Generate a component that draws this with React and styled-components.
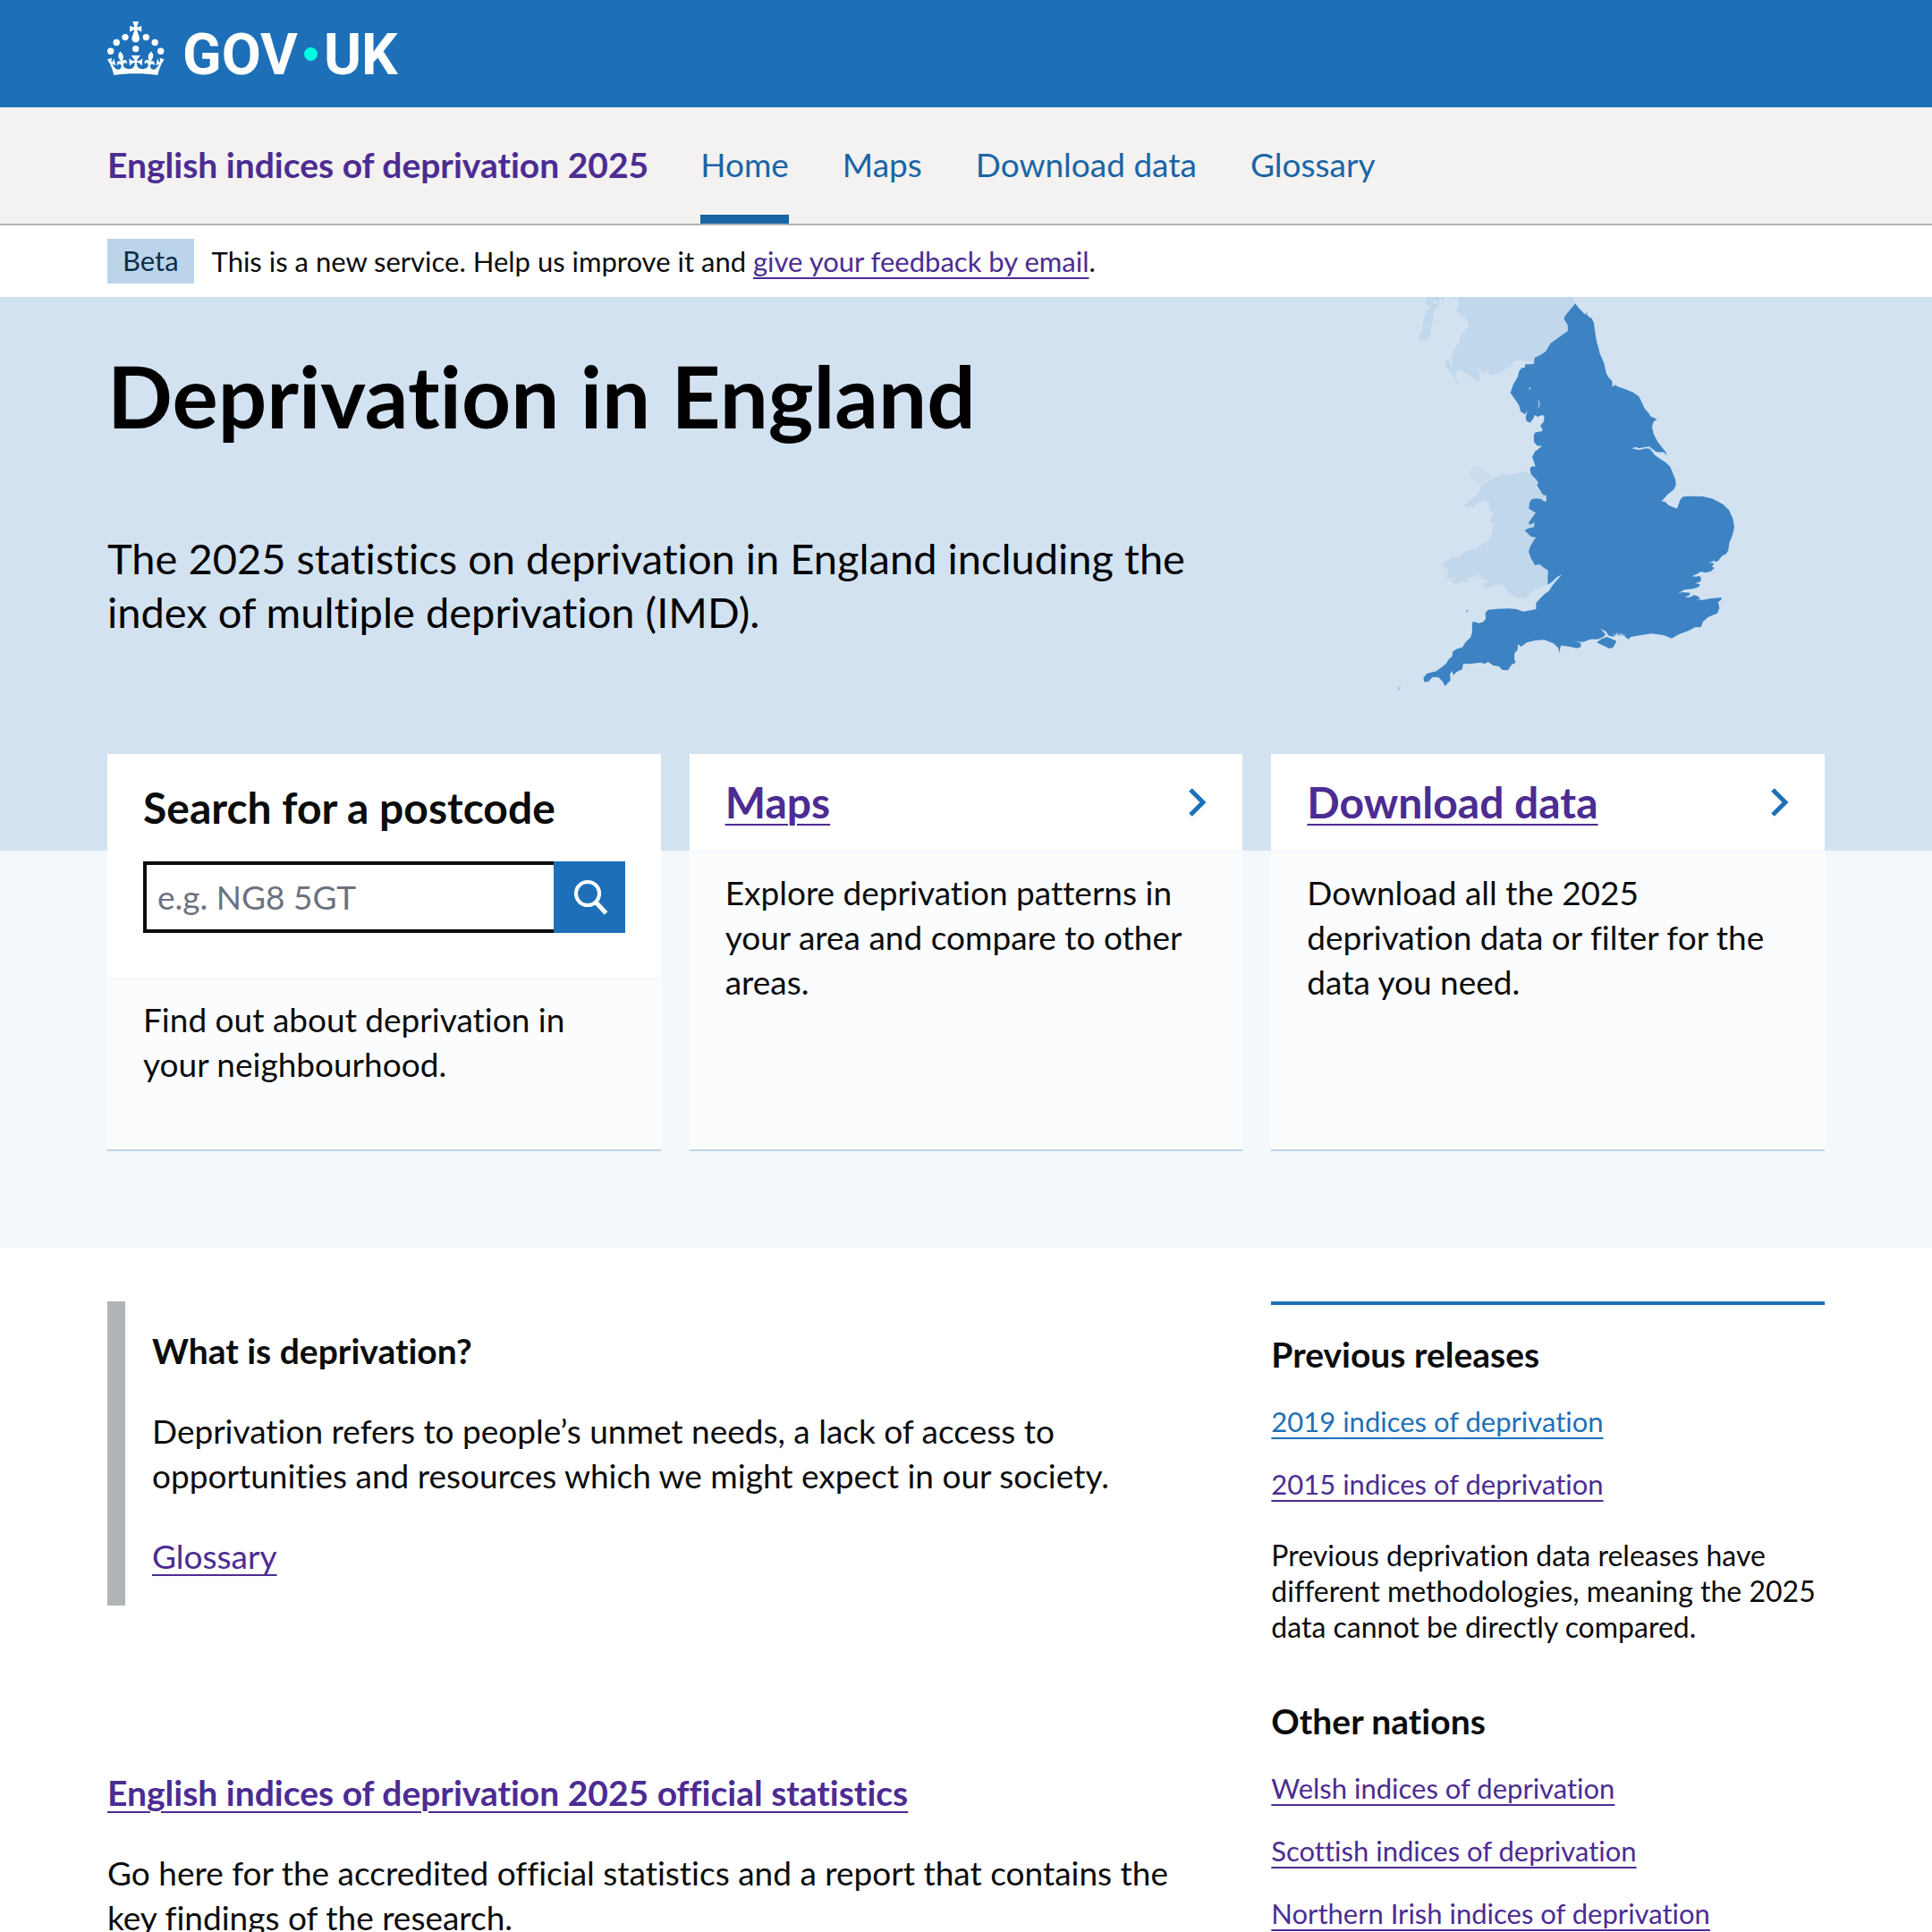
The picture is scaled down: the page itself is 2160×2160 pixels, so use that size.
import React from "react";
import styled, { createGlobalStyle } from "styled-components";

const color = {
  brand: "#1d70b8",
  brandDark: "#1a65a6",
  visited: "#4c2c92",
  text: "#0b0c0c",
  grey: "#f3f2f1",
  border: "#b1b4b6",
  tint: "#bbd4ea",
  hero: "#d2e2f1",
  pale: "#f4f8fb",
};

const GlobalStyle = createGlobalStyle`
  *, *::before, *::after { box-sizing: border-box; }
  body {
    margin: 0;
    background: #ffffff;
    color: ${color.text};
    font-family: Lato, "Liberation Sans", sans-serif;
    font-size: 37px;
    font-variant-ligatures: none;
    line-height: 50px;
  }
  h1, h2, h3, p, ul { margin: 0; padding: 0; }
  ul { list-style: none; }
`;

const Container = styled.div`
  box-sizing: content-box;
  max-width: 1920px;
  margin: 0 auto;
  padding: 0 120px;
`;

const Link = styled.a`
  color: ${(p) => (p.$fresh ? color.brand : color.visited)};
  text-decoration: underline;
  text-decoration-thickness: 2px;
  text-underline-offset: 6px;
`;

/* Header */

const Header = styled.header`
  background: ${color.brand};
`;

const LogoLink = styled.a`
  display: inline-flex;
  align-items: center;
  height: 120px;
  padding-top: 4px;
  color: #ffffff;
  font-family: Roboto, sans-serif;
  font-size: 64px;
  font-weight: 700;
  line-height: 60px;
  text-decoration: none;
`;

const Crown = styled.svg`
  width: 64px;
  height: 60px;
  margin: 0 20px 16px 0;
  fill: currentColor;
`;

const LogoDot = styled.span`
  width: 15px;
  height: 15px;
  margin: 0 7px 4px;
  border-radius: 50%;
  background: #00ffe0;
`;

/* Service navigation */

const ServiceBar = styled.div`
  background: ${color.grey};
  border-bottom: 2px solid ${color.border};
`;

const ServiceRow = styled(Container)`
  display: flex;
  gap: 58px;
`;

const ServiceName = styled.a`
  padding: 39px 0 41px;
  color: ${color.visited};
  font-size: 39px;
  font-weight: 700;
  text-decoration: none;
`;

const NavList = styled.ul`
  display: flex;
  gap: 60px;
`;

const NavLink = styled.a`
  display: block;
  padding: 39px 0 31px;
  border-bottom: 10px solid ${(p) => (p.$active ? color.brandDark : "transparent")};
  color: ${color.brandDark};
  text-decoration: none;
`;

/* Phase banner */

const PhaseBanner = styled(Container)`
  display: flex;
  align-items: center;
  gap: 20px;
  height: 80px;
  font-size: 31px;
  line-height: 40px;
`;

const Tag = styled.strong`
  padding: 4px 17px 6px;
  background: ${color.tint};
  color: #0c2d4a;
  font-weight: 400;
`;

/* Hero */

const Hero = styled.section`
  background: ${color.hero};
  color: #000000;
`;

const HeroRow = styled(Container)`
  display: flex;
  justify-content: space-between;
  padding-bottom: 154px;
`;

const HeroText = styled.div`
  flex: 0 1 1268px;
  padding-top: 60px;
`;

const HeroTitle = styled.h1`
  font-size: 96px;
  line-height: 100px;
`;

const HeroLead = styled.p`
  margin-top: 102px;
  font-size: 47px;
  line-height: 60px;
`;

const MapSvg = styled.svg`
  flex: none;
  width: 440px;
  height: 465px;
  margin-right: 60px;
`;

/* Cards */

const CardSection = styled.section`
  background: ${color.pale};
  padding-bottom: 108px;
`;

const CardGrid = styled(Container)`
  display: grid;
  grid-template-columns: repeat(3, minmax(0, 1fr));
  gap: 32px;
`;

const Card = styled.article`
  display: flex;
  flex-direction: column;
  margin-top: -108px;
  background: #fbfcfe;
  border-bottom: 2px solid ${color.tint};
`;

const CardHead = styled.div`
  display: flex;
  align-items: center;
  justify-content: space-between;
  padding: 24px 40px;
  background: #ffffff;
  border-bottom: 2px solid ${color.pale};
`;

const SearchHead = styled.form`
  display: grid;
  grid-template-columns: minmax(0, 1fr);
  gap: 30px;
  padding: 30px 40px 50px;
  background: #ffffff;
  border-bottom: 2px solid ${color.pale};
`;

const CardTitle = styled.h2`
  font-size: 48px;
  line-height: 60px;
`;

const CardText = styled.p`
  padding: 20px 40px 70px;
`;

const SearchRow = styled.div`
  display: flex;
  height: 80px;
`;

const SearchInput = styled.input`
  flex: 1;
  min-width: 0;
  padding: 0 12px;
  border: 4px solid ${color.text};
  border-right: 0;
  border-radius: 0;
  background: #ffffff;
  color: ${color.text};
  font: inherit;

  &::placeholder {
    color: #6b7280;
    opacity: 1;
  }
`;

const SearchButton = styled.button`
  flex: none;
  width: 80px;
  padding: 0;
  border: 0;
  background: ${color.brand};
  color: #ffffff;

  svg {
    display: block;
  }
`;

/* Main content */

const Main = styled(Container)`
  display: grid;
  grid-template-columns: repeat(3, minmax(0, 1fr));
  gap: 32px;
  padding-top: 60px;
  padding-bottom: 60px;
`;

const Article = styled.div`
  grid-column: span 2;
`;

const Inset = styled.div`
  display: grid;
  gap: 40px;
  padding: 30px;
  border-left: 20px solid ${color.border};
`;

const SmallHeading = styled.h3`
  font-size: 39px;
  line-height: 50px;
`;

const Statistics = styled.section`
  display: grid;
  gap: 40px;
  max-width: 1220px;
  margin-top: 184px;
`;

const Aside = styled.aside`
  display: grid;
  align-content: start;
  gap: 60px;
  padding-top: 30px;
  border-top: 4px solid ${color.brand};
`;

const LinkList = styled.ul`
  display: grid;
  gap: 30px;
  margin-top: 30px;
  font-size: 31px;
  line-height: 40px;
`;

const Note = styled.p`
  margin-top: 40px;
  font-size: 32px;
  line-height: 40px;
`;

function CrownIcon() {
  return (
    <Crown viewBox="0 0 64 60" aria-hidden="true">
      <circle cx="20" cy="17.6" r="3.7" />
      <circle cx="10.2" cy="23.5" r="3.7" />
      <circle cx="3.7" cy="33.2" r="3.7" />
      <circle cx="31.7" cy="30.6" r="3.7" />
      <circle cx="43.3" cy="17.6" r="3.7" />
      <circle cx="53.2" cy="23.5" r="3.7" />
      <circle cx="59.7" cy="33.2" r="3.7" />
      <path d="M33.1,9.8c.2-.1.3-.3.5-.5l4.6,2.4v-6.8l-4.6,1.5c-.1-.2-.3-.3-.5-.5l1.9-5.9h-6.7l1.9,5.9c-.2.1-.3.3-.5.5l-4.6-1.5v6.8l4.6-2.4c.1.2.3.3.5.5l-2.6,8c-.9,2.8,1.2,5.7,4.1,5.7h0c3,0,5.1-2.9,4.1-5.7l-2.6-8ZM37,37.9s-3.4,3.8-4.1,6.1c2.2,0,4.2-.5,6.4-2.8l-.7,8.5c-2-2.8-4.4-4.1-5.7-3.8.1,3.1.5,6.7,5.8,7.2,3.7.3,6.7-1.5,7-3.8.4-2.6-2-4.3-3.7-1.6-1.4-4.5,2.4-6.1,4.9-3.2-1.9-4.5-1.8-7.7,2.4-10.9,3,4,2.6,7.3-1.2,11.1,2.4-1.3,6.2,0,4,4.6-1.2-2.8-3.7-2.2-4.2.2-.3,1.7.7,3.7,3,4.2,1.9.3,4.7-.9,7-5.9-1.3,0-2.4.7-3.9,1.7l2.4-8c.6,2.3,1.4,3.7,2.2,4.5.6-1.6.5-2.8,0-5.3l5,1.8c-2.6,3.6-5.2,8.7-7.3,17.5-7.4-1.1-15.7-1.7-24.5-1.7h0c-8.8,0-17.1.6-24.5,1.7-2.1-8.9-4.7-13.9-7.3-17.5l5-1.8c-.5,2.5-.6,3.7,0,5.3.8-.8,1.6-2.3,2.2-4.5l2.4,8c-1.5-1-2.6-1.7-3.9-1.7,2.3,5,5.2,6.2,7,5.9,2.3-.4,3.3-2.4,3-4.2-.5-2.4-3-3.1-4.2-.2-2.2-4.6,1.6-6,4-4.6-3.7-3.7-4.2-7.1-1.2-11.1,4.2,3.2,4.3,6.4,2.4,10.9,2.5-2.8,6.3-1.3,4.9,3.2-1.8-2.7-4.1-1-3.7,1.6.3,2.3,3.3,4.1,7,3.8,5.4-.5,5.7-4.2,5.8-7.2-1.3-.2-3.7,1-5.7,3.8l-.7-8.5c2.2,2.3,4.2,2.7,6.4,2.8-.7-2.3-4.1-6.1-4.1-6.1h10.6Z" />
    </Crown>
  );
}

function EnglandMap() {
  return (
    <MapSvg viewBox="0 36 1320 1395" role="img" aria-label="Map of England">
      <g fill="#c1d7eb">
        <path d="M267,30 273,60 266,85 285,98 302,115 307,135 290,150 278,168 275,190 255,215 246,235 253,266 247,266 240,247 230,250 228,265 240,285 256,300 262,322 270,331 272,325 262,305 264,288 275,280 300,292 325,312 340,320 345,305 337,272 355,290 368,283 375,295 395,298 415,290 425,278 450,270 455,252 475,250 527,254 660,150 664,58 652,30Z" />
        <path d="M185,55 208,65 190,85 187,115 178,140 180,165 165,180 142,178 138,168 150,150 155,110 165,85Z" />
        <path d="M160,30 205,30 208,60 195,48 188,48 178,62 165,66 160,55 166,42ZM208,30 224,30 220,52ZM245,30 262,30 255,47Z" />
        <path d="M520,634 505,625 490,622 460,630 440,634 412,625 415,632 385,645 365,655 347,672 345,682 330,703 305,720 288,742 318,738 323,744 332,728 355,718 373,720 376,750 388,760 378,780 382,793 398,797 387,805 384,830 370,855 350,868 328,883 305,885 290,892 272,908 243,910 240,918 212,936 238,948 238,965 222,973 245,980 268,978 258,985 240,985 262,1000 285,990 300,992 297,980 320,975 340,966 348,978 365,987 382,988 358,994 355,1008 370,1013 400,1000 420,1002 440,1028 465,1044 490,1047 508,1040 512,1030 525,1020 545,1012 572,1000 585,950 600,700Z" />
      </g>
      <path
        fill="#ccddef"
        d="M297,626 312,632 318,650 330,662 345,670 352,662 368,650 384,632 368,628 360,612 340,602 320,606 313,615 310,630Z"
      />
      <g fill="#3d83c4">
        <path d="M664,58 674,72 684,82 694,93 704,95 709,103 719,108 726,124 731,160 735,185 741,205 746,226 760,258 767,290 775,306 787,318 788,338 797,331 806,337 830,345 858,356 877,370 887,390 896,410 912,428 915,436 938,446 926,454 921,472 926,495 940,522 957,544 967,556 971,570 962,557 935,556 922,546 912,538 895,540 878,544 865,539 854,544 866,547 880,549 900,544 914,545 921,554 930,566 948,579 966,590 982,606 992,630 1000,650 1001,668 994,682 975,697 953,721 965,723 977,735 990,740 1004,746 1009,735 1015,716 1025,706 1048,704 1092,705 1125,713 1160,732 1180,752 1192,780 1197,808 1191,834 1180,862 1177,885 1170,898 1157,904 1142,922 1130,925 1128,917 1124,924 1110,926 1130,930 1122,940 1130,945 1118,957 1100,961 1085,957 1070,966 1054,973 1070,974 1080,971 1086,980 1084,990 1066,997 1082,999 1078,1008 1060,1015 1030,1018 1008,1030 1022,1026 1048,1028 1048,1035 1031,1043 1048,1043 1062,1036 1076,1040 1082,1050 1066,1050 1090,1052 1120,1047 1153,1044 1154,1050 1143,1060 1147,1080 1140,1097 1110,1109 1092,1125 1085,1144 1065,1144 1045,1155 1010,1168 987,1181 960,1171 920,1165 880,1171 848,1177 843,1184 830,1176 828,1166 824,1174 820,1162 818,1174 812,1162 810,1174 802,1162 800,1174 794,1163 794,1176 776,1172 766,1158 748,1148 765,1168 758,1176 740,1184 715,1184 690,1193 663,1191 682,1196 682,1210 670,1214 640,1208 615,1205 610,1230 606,1213 590,1198 560,1186 530,1188 500,1195 482,1209 471,1200 470,1220 460,1230 459,1250 464,1262 450,1270 438,1288 418,1287 408,1275 388,1272 372,1260 360,1266 345,1262 310,1267 288,1266 284,1285 268,1292 254,1304 250,1290 243,1302 245,1322 235,1332 227,1342 218,1325 205,1312 185,1311 172,1325 158,1328 154,1314 165,1300 185,1294 195,1292 212,1280 230,1266 240,1250 250,1243 253,1225 268,1216 285,1211 295,1195 312,1178 318,1160 317,1140 320,1124 340,1130 355,1126 363,1115 362,1095 372,1085 400,1082 440,1081 465,1083 490,1091 515,1087 532,1083 532,1062 545,1048 560,1033 575,1022 590,1000 619,966 600,977 585,992 571,1001 572,953 555,942 545,933 528,935 515,912 507,890 512,873 531,842 515,840 494,819 505,812 525,808 527,793 510,800 507,793 531,760 508,746 510,725 518,714 535,712 550,714 553,718 562,723 567,720 566,702 555,700 545,683 535,667 540,660 532,648 515,630 511,612 518,604 530,605 538,618 554,628 568,624 566,632 550,634 535,620 525,590 519,573 528,555 552,536 535,535 525,522 524,500 530,490 552,487 554,480 546,468 557,455 560,440 555,431 538,438 528,432 522,445 512,458 500,452 497,440 503,418 495,430 480,420 475,400 465,385 446,358 455,330 470,305 475,285 484,274 495,273 495,262 510,262 525,260 527,240 545,232 565,218 580,192 610,170 639,150 638,130 626,110 627,102 645,80Z" />
        <path d="M735,1195 752,1183 770,1176 802,1190 790,1212 778,1215ZM695,89 704,89 702,93ZM299,1087 302,1086 302,1094 299,1092ZM67,1345 72,1346 70,1349ZM74,1342 79,1342 77,1344ZM70,1350 76,1350 73,1353Z" />
      </g>
      <path
        fill="none"
        stroke={color.hero}
        strokeWidth="3"
        d="M511,339v8M539,382l4,10l-2,14M500,455l6,6"
      />
    </MapSvg>
  );
}

function SearchIcon() {
  return (
    <svg width="80" height="80" viewBox="0 0 80 80" fill="none" stroke="currentColor" aria-hidden="true">
      <circle cx="38" cy="36" r="13" strokeWidth="4.2" />
      <path d="M47 45.5 58.5 58" strokeWidth="5" />
    </svg>
  );
}

function Chevron() {
  return (
    <svg width="20" height="32" viewBox="0 0 20 32" fill="none" stroke={color.brand} aria-hidden="true">
      <path d="M2 2 16 16 2 30" strokeWidth="5" />
    </svg>
  );
}

function LinkCard({ title, children }) {
  return (
    <Card>
      <CardHead>
        <CardTitle>
          <Link href="#">{title}</Link>
        </CardTitle>
        <Chevron />
      </CardHead>
      <CardText>{children}</CardText>
    </Card>
  );
}

const navItems = ["Home", "Maps", "Download data", "Glossary"];

const releases = [
  { label: "2019 indices of deprivation", fresh: true },
  { label: "2015 indices of deprivation" },
];

const nations = [
  { label: "Welsh indices of deprivation" },
  { label: "Scottish indices of deprivation" },
  { label: "Northern Irish indices of deprivation" },
];

function Links({ items }) {
  return (
    <LinkList>
      {items.map(({ label, fresh }) => (
        <li key={label}>
          <Link href="#" $fresh={fresh}>
            {label}
          </Link>
        </li>
      ))}
    </LinkList>
  );
}

export default function App() {
  return (
    <>
      <GlobalStyle />
      <Header>
        <Container>
          <LogoLink href="#" aria-label="GOV.UK">
            <CrownIcon />
            <span>GOV</span>
            <LogoDot />
            <span>UK</span>
          </LogoLink>
        </Container>
      </Header>

      <ServiceBar>
        <ServiceRow>
          <ServiceName href="#">English indices of deprivation 2025</ServiceName>
          <nav aria-label="Menu">
            <NavList>
              {navItems.map((item, index) => (
                <li key={item}>
                  <NavLink href="#" $active={index === 0}>
                    {item}
                  </NavLink>
                </li>
              ))}
            </NavList>
          </nav>
        </ServiceRow>
      </ServiceBar>

      <PhaseBanner>
        <Tag>Beta</Tag>
        <span>
          This is a new service. Help us improve it and <Link href="#">give your feedback by email</Link>.
        </span>
      </PhaseBanner>

      <Hero>
        <HeroRow>
          <HeroText>
            <HeroTitle>Deprivation in England</HeroTitle>
            <HeroLead>
              The 2025 statistics on deprivation in England including the index of multiple deprivation (IMD).
            </HeroLead>
          </HeroText>
          <EnglandMap />
        </HeroRow>
      </Hero>

      <CardSection>
        <CardGrid>
          <Card>
            <SearchHead>
              <CardTitle>
                <label htmlFor="postcode">Search for a postcode</label>
              </CardTitle>
              <SearchRow>
                <SearchInput id="postcode" type="text" placeholder="e.g. NG8 5GT" />
                <SearchButton type="submit" aria-label="Search">
                  <SearchIcon />
                </SearchButton>
              </SearchRow>
            </SearchHead>
            <CardText>Find out about deprivation in your neighbourhood.</CardText>
          </Card>
          <LinkCard title="Maps">Explore deprivation patterns in your area and compare to other areas.</LinkCard>
          <LinkCard title="Download data">
            Download all the 2025 deprivation data or filter for the data you need.
          </LinkCard>
        </CardGrid>
      </CardSection>

      <Main as="main">
        <Article>
          <Inset>
            <SmallHeading>What is deprivation?</SmallHeading>
            <p>
              Deprivation refers to people’s unmet needs, a lack of access to opportunities and resources which we
              might expect in our society.
            </p>
            <p>
              <Link href="#">Glossary</Link>
            </p>
          </Inset>
          <Statistics>
            <SmallHeading>
              <Link href="#">English indices of deprivation 2025 official statistics</Link>
            </SmallHeading>
            <p>
              Go here for the accredited official statistics and a report that contains the key findings of the
              research.
            </p>
          </Statistics>
        </Article>
        <Aside>
          <section>
            <SmallHeading>Previous releases</SmallHeading>
            <Links items={releases} />
            <Note>
              Previous deprivation data releases have different methodologies, meaning the 2025 data cannot be
              directly compared.
            </Note>
          </section>
          <section>
            <SmallHeading>Other nations</SmallHeading>
            <Links items={nations} />
          </section>
        </Aside>
      </Main>
    </>
  );
}
